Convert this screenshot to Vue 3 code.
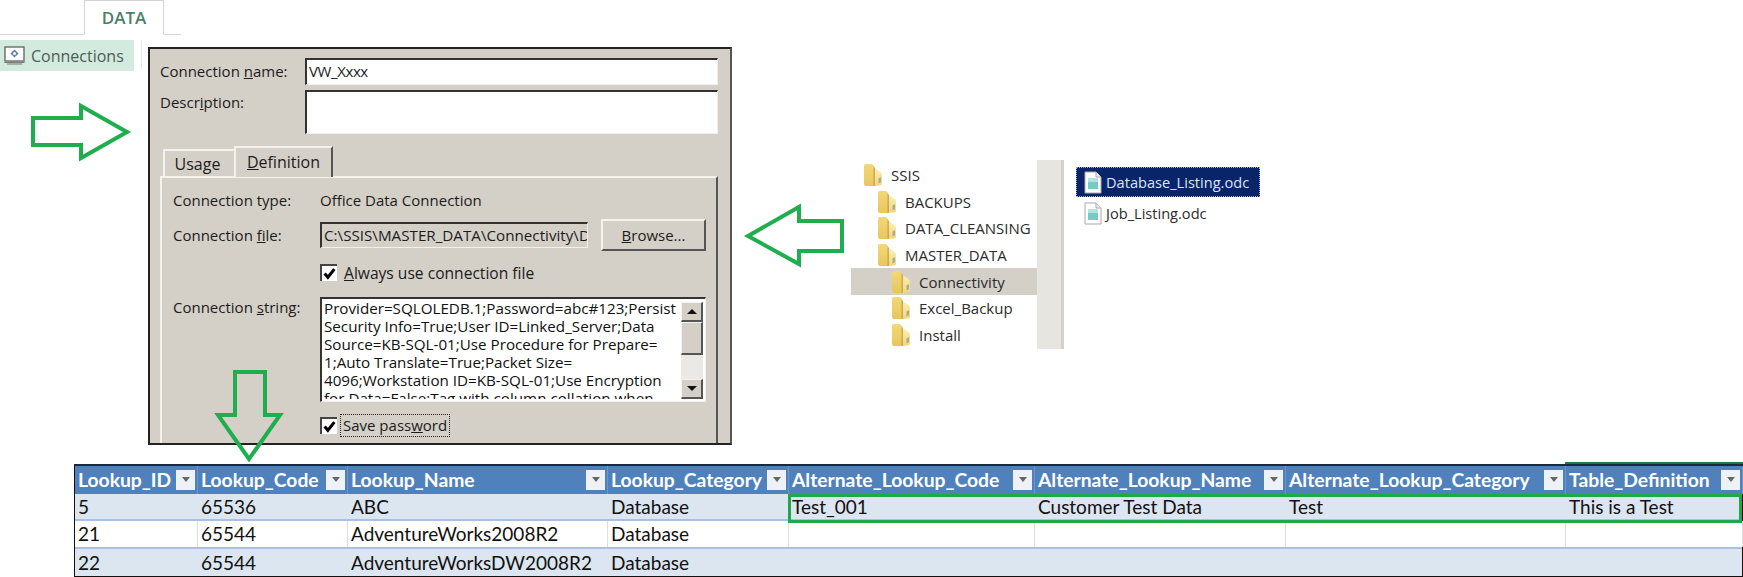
<template>
  <div class="page">
    <div class="tabstrip">
      <div class="data-tab">DATA</div>
    </div>

    <div class="workspace">
      <div class="ribbon">
        <div class="conn-btn">
          <svg class="conn-icon" width="21" height="19" viewBox="0 0 21 19">
            <rect x="1" y="1" width="19" height="14" fill="#fff" stroke="#6a6a6a" stroke-width="1.4" />
            <path d="M0.5 16.5h20M3 18h15" stroke="#777" stroke-width="1.2" fill="none" />
            <path d="M10.5 3.5l4 4-4 4-4-4z" fill="#5b7fc4" />
            <circle cx="10.5" cy="7.5" r="1.5" fill="#fff" />
          </svg>
          <span>Connections</span>
        </div>
        <div class="ribbon-sep"></div>
      </div>

      <div class="dialog">
        <div class="field-row name-row">
          <label class="dlg-label">Connection <u>n</u>ame:</label>
          <div class="sunken name-input">VW_Xxxx</div>
        </div>
        <div class="field-row desc-row">
          <label class="dlg-label">Descr<u>i</u>ption:</label>
          <div class="sunken desc-input"></div>
        </div>

        <div class="tabs">
          <div class="tab usage">Usa<u>g</u>e</div>
          <div class="tab definition"><u>D</u>efinition</div>
        </div>

        <div class="panel">
          <div class="panel-row type-row">
            <span class="panel-label">Connection type:</span>
            <span>Office Data Connection</span>
          </div>
          <div class="panel-row conn-file-row">
            <span class="panel-label">Connection <u>f</u>ile:</span>
            <div class="sunken file-input">C:\SSIS\MASTER_DATA\Connectivity\D</div>
            <div class="browse"><u>B</u>rowse...</div>
          </div>
          <div class="panel-row check-row always-row">
            <span class="check">
              <svg width="13" height="13" viewBox="0 0 12 12"><path d="M1.5 6l3 3.5L10.5 2" fill="none" stroke="#000" stroke-width="2.8" /></svg>
            </span>
            <span class="always-text"><u>A</u>lways use connection file</span>
          </div>
          <div class="panel-row string-row">
            <span class="panel-label"><span class="string-label">Connection <u>s</u>tring:</span></span>
            <div class="sunken string-box">
              <div class="string-text">
                <div v-for="line in connLines" :key="line" class="string-line">{{ line }}</div>
              </div>
              <div class="scrollbar">
                <div class="sb-btn"><i class="tri up"></i></div>
                <div class="sb-thumb"></div>
                <div class="sb-track"></div>
                <div class="sb-btn"><i class="tri down"></i></div>
              </div>
            </div>
          </div>
          <div class="panel-row check-row save-row">
            <span class="check">
              <svg width="13" height="13" viewBox="0 0 12 12"><path d="M1.5 6l3 3.5L10.5 2" fill="none" stroke="#000" stroke-width="2.8" /></svg>
            </span>
            <span class="focus">Save pass<u>w</u>ord</span>
          </div>
        </div>
      </div>

      <div class="explorer">
        <div class="tree">
          <div
            v-for="node in folders"
            :key="node.name"
            class="tree-row"
            :class="{ selected: node.selected }"
            :style="{ paddingLeft: node.indent + 'px' }"
          >
            <svg class="folder" width="20" height="24" viewBox="0 0 20 24">
              <path d="M1 2.5Q1 1 2.5 1H8.5Q10 1 10.5 2.5L11 5V23H3Q1 23 1 21z" fill="url(#folderBack)" />
              <path d="M11 4.5L17.5 9Q19 10 19 12V20Q19 22.5 16.5 22.5L11 23z" fill="url(#folderFront)" />
              <path d="M10.5 3L12 5V22.5L10.5 23z" fill="#c2982f" opacity="0.75" />
              <path d="M15.5 15.5L18 14V19L15.5 20.5z" fill="#a9aa92" />
            </svg>
            <span>{{ node.name }}</span>
          </div>
        </div>
        <div class="splitter"></div>
        <div class="files">
          <div v-for="file in files" :key="file.name" class="list-row" :class="{ selected: file.selected }">
            <svg class="file-icon" width="18" height="23" viewBox="0 0 18 23">
              <path d="M1 1H12L17 6V22H1z" fill="#fff" stroke="#a9a9a9" />
              <path d="M12 1V6H17" fill="#eee" stroke="#a9a9a9" />
              <rect x="4" y="7" width="10" height="11" fill="#79c9c4" />
              <rect x="4" y="7" width="10" height="4" fill="#b4e2df" />
            </svg>
            <span>{{ file.name }}</span>
          </div>
        </div>
      </div>
    </div>

    <div class="sheet">
      <div class="sheet-row head">
        <div v-for="col in columns" :key="col.name" class="cell" :style="{ width: col.width + 'px' }">
          <span>{{ col.name }}</span>
          <span class="filter"><i class="tri down"></i></span>
        </div>
      </div>
      <div v-for="(row, r) in rows" :key="r" class="sheet-row body" :class="{ band: r % 2 === 0, plain: r % 2 === 1 }">
        <div v-for="(col, c) in columns" :key="col.name" class="cell" :style="{ width: col.width + 'px' }">{{ row[c] }}</div>
      </div>
    </div>

    <div class="test-outline"></div>
    <div class="def-mark"></div>

    <!-- green call-out arrows drawn over the screenshot pieces -->
    <svg class="arrows" width="1743" height="577" viewBox="0 0 1743 577">
      <defs>
        <linearGradient id="folderBack" x1="0" y1="0" x2="0" y2="1">
          <stop offset="0" stop-color="#f2d878" />
          <stop offset="1" stop-color="#e8c65e" />
        </linearGradient>
        <linearGradient id="folderFront" x1="0" y1="0" x2="0" y2="1">
          <stop offset="0" stop-color="#fbf0b8" />
          <stop offset="1" stop-color="#f0d67e" />
        </linearGradient>
      </defs>
      <g fill="none" stroke="#1fae4e" stroke-width="4">
        <path d="M33 118H81V106L127 132L81 158V145H33z" />
        <path d="M748 236L799 207V221H842V251H799V264z" />
        <path d="M235 372H265V415H280L249 459L218 415H235z" />
      </g>
    </svg>
  </div>
</template>

<script setup>
const connLines = [
  'Provider=SQLOLEDB.1;Password=abc#123;Persist',
  'Security Info=True;User ID=Linked_Server;Data',
  'Source=KB-SQL-01;Use Procedure for Prepare=',
  '1;Auto Translate=True;Packet Size=',
  '4096;Workstation ID=KB-SQL-01;Use Encryption',
  'for Data=False;Tag with column collation when',
]

const folders = [
  { name: 'SSIS', indent: 12 },
  { name: 'BACKUPS', indent: 26 },
  { name: 'DATA_CLEANSING', indent: 26 },
  { name: 'MASTER_DATA', indent: 26 },
  { name: 'Connectivity', indent: 40, selected: true },
  { name: 'Excel_Backup', indent: 40 },
  { name: 'Install', indent: 40 },
]

const files = [
  { name: 'Database_Listing.odc', selected: true },
  { name: 'Job_Listing.odc' },
]

const columns = [
  { name: 'Lookup_ID', width: 123 },
  { name: 'Lookup_Code', width: 150 },
  { name: 'Lookup_Name', width: 260 },
  { name: 'Lookup_Category', width: 181 },
  { name: 'Alternate_Lookup_Code', width: 246 },
  { name: 'Alternate_Lookup_Name', width: 251 },
  { name: 'Alternate_Lookup_Category', width: 280 },
  { name: 'Table_Definition', width: 177 },
]

const rows = [
  ['5', '65536', 'ABC', 'Database', 'Test_001', 'Customer Test Data', 'Test', 'This is a Test'],
  ['21', '65544', 'AdventureWorks2008R2', 'Database', '', '', '', ''],
  ['22', '65544', 'AdventureWorksDW2008R2', 'Database', '', '', '', ''],
]
</script>

<style>
html,
body {
  margin: 0;
  background: #fff;
}
</style>

<style scoped>
.page {
  position: relative;
  width: 1743px;
  height: 577px;
  overflow: hidden;
  background: #fff;
  font-family: "Open Sans", "Noto Sans", sans-serif;
  color: #1a1a1a;
}

.tabstrip {
  width: 181px;
  height: 35px;
  box-sizing: border-box;
  padding-left: 84px;
  border-bottom: 1px solid #d4d4d4;
}

.data-tab {
  width: 80px;
  height: 35px;
  box-sizing: border-box;
  border: 1px solid #d4d4d4;
  border-bottom: 1px solid #fff;
  display: flex;
  align-items: center;
  justify-content: center;
  font-size: 17px;
  font-weight: 600;
  color: #4a7f68;
}

.workspace {
  display: flex;
  height: 429px;
}

.ribbon {
  width: 148px;
  flex: none;
  display: flex;
  align-items: flex-start;
  padding-top: 5px;
  box-sizing: border-box;
}

.conn-btn {
  width: 134px;
  height: 31px;
  display: flex;
  align-items: center;
  background: #d3eadf;
  color: #4d5d55;
  font-size: 16px;
  padding-left: 4px;
  box-sizing: border-box;
}

.conn-icon {
  margin-right: 6px;
  flex: none;
}

.ribbon-sep {
  width: 1px;
  height: 30px;
  margin-left: 7px;
  background: #e6e6e6;
}

.dialog {
  width: 584px;
  height: 398px;
  margin-top: 12px;
  box-sizing: border-box;
  border: 2px solid #222;
  border-right-color: #555;
  background: #d4d0c8;
  padding: 9px 0 0 10px;
  display: flex;
  flex-direction: column;
  font-size: 15px;
  color: #1c1c1c;
}

.field-row {
  display: flex;
}

.desc-row {
  margin-top: 5px;
}

.dlg-label {
  width: 145px;
  flex: none;
  line-height: 24px;
}

.name-row .dlg-label {
  line-height: 26px;
}

.sunken {
  box-sizing: border-box;
  background: #fff;
  border-top: 2px solid #333;
  border-left: 2px solid #333;
  border-right: 1px solid #f2f0ea;
  border-bottom: 1px solid #f2f0ea;
}

.name-input {
  width: 413px;
  height: 27px;
  padding-left: 2px;
  line-height: 23px;
  letter-spacing: -0.4px;
}

.desc-input {
  width: 413px;
  height: 44px;
}

.tabs {
  display: flex;
  align-items: flex-end;
  height: 30px;
  margin-top: 12px;
  padding-left: 3px;
  font-size: 16px;
}

.tab {
  box-sizing: border-box;
  border-top: 2px solid #f4f2ec;
  border-left: 2px solid #f4f2ec;
  border-right: 2px solid #555;
  background: #d4d0c8;
  text-align: center;
}

.usage {
  width: 71px;
  height: 27px;
  line-height: 27px;
  padding-right: 4px;
  border-right: none;
}

.definition {
  width: 99px;
  height: 31px;
  margin-bottom: -1px;
  line-height: 28px;
  position: relative;
  z-index: 1;
}

.panel {
  flex: 1;
  width: 558px;
  box-sizing: border-box;
  border-top: 2px solid #f4f2ec;
  border-left: 2px solid #f4f2ec;
  border-right: 2px solid #555;
  padding: 11px 0 0 11px;
}

.panel-row {
  display: flex;
  align-items: center;
}

.panel-label {
  width: 147px;
  flex: none;
}

.type-row {
  height: 22px;
}

.conn-file-row {
  margin-top: 8px;
  height: 32px;
}

.file-input {
  width: 268px;
  height: 26px;
  background: #d4d0c8;
  padding-left: 2px;
  line-height: 22px;
  white-space: nowrap;
  overflow: hidden;
  font-size: 15.2px;
}

.browse {
  width: 105px;
  height: 32px;
  margin-left: 13px;
  box-sizing: border-box;
  border-top: 2px solid #f4f2ec;
  border-left: 2px solid #f4f2ec;
  border-right: 2px solid #555;
  border-bottom: 2px solid #555;
  display: flex;
  align-items: center;
  justify-content: center;
}

.check-row {
  padding-left: 147px;
}

.always-row {
  margin-top: 13px;
  height: 17px;
}

.always-text {
  font-size: 15.6px;
}

.check {
  width: 17px;
  height: 17px;
  flex: none;
  margin-right: 7px;
  box-sizing: border-box;
  background: #fff;
  border-top: 2px solid #444;
  border-left: 2px solid #444;
  display: flex;
  align-items: center;
  justify-content: center;
}

.string-row {
  margin-top: 16px;
  align-items: flex-start;
}

.string-label {
  display: block;
}

.string-box {
  width: 386px;
  height: 105px;
  display: flex;
  justify-content: space-between;
  padding: 0 2px 2px 2px;
}

.string-text {
  flex: 1;
  min-width: 0;
  overflow: hidden;
  font-size: 15.2px;
  color: #111;
}

.string-line {
  height: 18px;
  line-height: 18px;
  white-space: nowrap;
}

.scrollbar {
  width: 22px;
  flex: none;
  display: flex;
  flex-direction: column;
  padding-top: 3px;
}

.sb-btn,
.sb-thumb {
  box-sizing: border-box;
  background: #d4d0c8;
  border-top: 1px solid #f4f2ec;
  border-left: 1px solid #f4f2ec;
  border-right: 2px solid #555;
  border-bottom: 2px solid #555;
}

.sb-btn {
  height: 20px;
  display: flex;
  align-items: center;
  justify-content: center;
}

.sb-thumb {
  height: 33px;
}

.sb-track {
  flex: 1;
  background: #ebe9e4;
}

.tri {
  width: 0;
  height: 0;
  border-left: 5px solid transparent;
  border-right: 5px solid transparent;
}

.tri.up {
  border-bottom: 5px solid #111;
}

.tri.down {
  border-top: 5px solid #111;
}

.save-row {
  margin-top: 13px;
  padding-left: 147px;
}

.save-row .check {
  margin-right: 4px;
}

.focus {
  outline: 1px dotted #222;
  padding: 0 2px;
  line-height: 21px;
}

.explorer {
  display: flex;
  align-items: flex-start;
  margin-left: 119px;
  margin-top: 125px;
  height: 190px;
  font-size: 15px;
  color: #2b2b2b;
}

.tree {
  width: 186px;
  padding-top: 2px;
}

.tree-row {
  height: 26.6px;
  display: flex;
  align-items: center;
  box-sizing: border-box;
  white-space: nowrap;
}

.tree-row.selected {
  background: #d4d0c8;
}

.folder {
  margin-right: 8px;
  flex: none;
}

.splitter {
  width: 27px;
  height: 189px;
  box-sizing: border-box;
  background: #e7e5e0;
  border-right: 3px solid #d4d2cc;
}

.files {
  margin-left: 12px;
  padding-top: 7px;
  width: 184px;
  font-size: 14.6px;
}

.list-row {
  height: 30px;
  display: flex;
  align-items: center;
  padding-left: 8px;
  box-sizing: border-box;
}

.list-row.selected {
  background: #0a246a;
  color: #d9e4f5;
  outline: 1px dotted #9fb0d0;
  outline-offset: -1px;
}

.list-row + .list-row {
  margin-top: 1px;
}

.file-icon {
  margin-right: 4px;
  flex: none;
}

.sheet {
  width: 1669px;
  margin-left: 74px;
  box-sizing: border-box;
  border: 1px solid #111;
  border-top: 2px solid #1a2a3a;
  border-bottom: 2px solid #111;
  font-family: Lato, "Liberation Sans", sans-serif;
  font-size: 19px;
}

.sheet-row {
  display: flex;
  height: 27.5px;
  box-sizing: border-box;
}

.cell {
  flex: none;
  box-sizing: border-box;
  display: flex;
  align-items: center;
  justify-content: space-between;
  padding: 0 3px;
  white-space: nowrap;
  overflow: hidden;
  color: #111;
}

.head {
  background: #4f81bd;
}

.head .cell {
  color: #fff;
  font-weight: 700;
  font-size: 19.3px;
  padding-right: 2px;
  border-right: 1px solid #6d96c8;
}

.body {
  border-bottom: 2px solid #a9c1de;
}

.body:last-child {
  border-bottom: none;
}

.band {
  background: #dce6f1;
}

.plain .cell {
  border-right: 1px solid #dedede;
}

.filter {
  width: 19px;
  height: 20px;
  flex: none;
  background: #eef1f6;
  display: flex;
  align-items: center;
  justify-content: center;
}

.filter .tri {
  border-left-width: 4px;
  border-right-width: 4px;
  border-top: 5px solid #666;
}

.test-outline {
  position: absolute;
  left: 788px;
  top: 494px;
  width: 954px;
  height: 29px;
  box-sizing: border-box;
  border: 3px solid #1fa84a;
}

.def-mark {
  position: absolute;
  left: 1565px;
  top: 462px;
  width: 178px;
  height: 2px;
  background: #1f7a3f;
}

.arrows {
  position: absolute;
  left: 0;
  top: 0;
  pointer-events: none;
}
</style>
